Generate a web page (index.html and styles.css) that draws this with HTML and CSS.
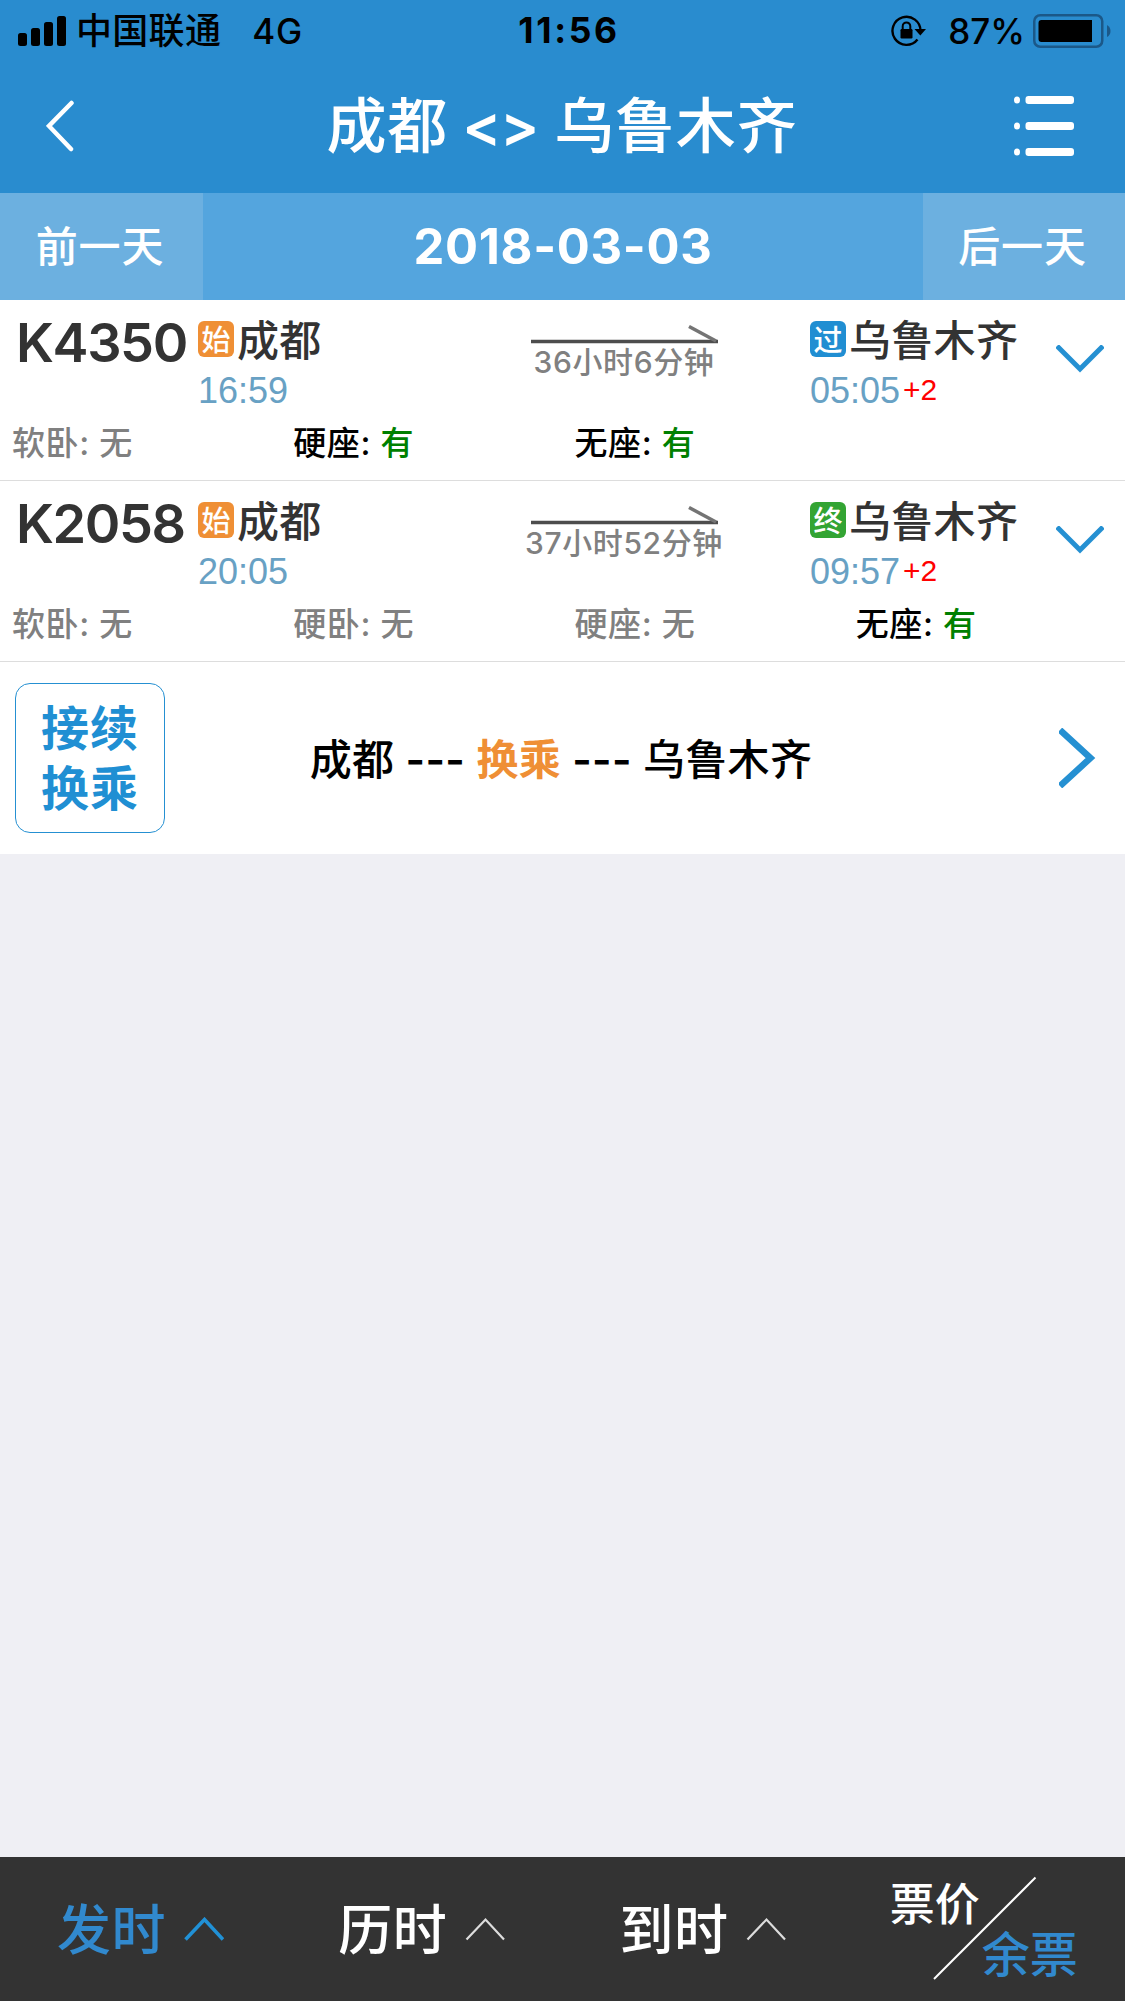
FILE: index.html
```html
<!DOCTYPE html>
<html lang="zh-CN">
<head>
<meta charset="utf-8">
<title>成都 - 乌鲁木齐</title>
<link rel="stylesheet" href="styles.css">
</head>
<body>
<div class="app">
  <header class="header">
    <div class="status">
      <div class="status-left">
        <svg class="signal" width="48" height="30" viewBox="0 0 48 30"><rect y="17" width="9" height="13" rx="2.5"/><rect x="13" y="12" width="9" height="18" rx="2.5"/><rect x="26" y="6" width="9" height="24" rx="2.5"/><rect x="39" width="9" height="30" rx="2.5"/></svg>
        <span class="carrier">中国联通</span>
        <span class="network">4G</span>
      </div>
      <span class="clock">11:56</span>
      <div class="status-right">
        <svg class="lock" width="36" height="32" viewBox="0 0 36 32"><path d="M29.5 16A14 14 0 1 0 26.5 24.5" fill="none" stroke="#000" stroke-width="2.4"/><path d="M23.5 14H35l-5.700 6.500z"/><rect x="9.500" y="14" width="12" height="9.500" rx="1.200"/><path d="M11.700 15v-3.800a3.800 3.800 0 0 1 7.600 0V15" fill="none" stroke="#000" stroke-width="2"/></svg>
        <span class="percent">87%</span>
        <svg class="battery" width="78" height="34" viewBox="0 0 78 34"><rect x="1.25" y="1.25" width="68" height="31.5" rx="6" fill="none" stroke="#1b5888" stroke-width="2.5"/><path d="M8.500 6H59v22H8.500a3 3 0 0 1-3-3V9a3 3 0 0 1 3-3z"/><path d="M74 11q3.500 2 3.500 6t-3.500 6z" fill="#1b5888"/></svg>
      </div>
    </div>
    <div class="nav">
      <svg class="back" width="30" height="52" viewBox="0 0 30 52"><path d="M25.500 3 3 26 25 49" fill="none" stroke="#fff" stroke-width="4.500" stroke-linecap="round"/></svg>
      <h1 class="title"><span>成都</span><span class="swap">&lt;&gt;</span><span>乌鲁木齐</span></h1>
      <svg class="menu" width="60" height="60" viewBox="0 0 60 60" fill="#fff"><ellipse cx="3" cy="4" rx="3" ry="3.600"/><ellipse cx="3" cy="30" rx="3" ry="3.600"/><ellipse cx="3" cy="56" rx="3" ry="3.600"/><rect x="11.500" width="48.500" height="8" rx="3"/><rect x="11.500" y="26" width="48.500" height="8" rx="3"/><rect x="11.500" y="52" width="48.500" height="8" rx="3"/></svg>
    </div>
  </header>

  <div class="datebar">
    <span class="day">前一天</span>
    <strong class="date">2018-03-03</strong>
    <span class="day">后一天</span>
  </div>

  <main class="list">
    <section class="train">
      <div class="trip">
        <b class="number">K4350</b>
        <div class="stop">
          <div class="station"><i class="badge start">始</i>成都</div>
          <div class="time">16:59</div>
        </div>
        <div class="span">
          <svg class="arrow" width="187" height="19" viewBox="0 0 187 19"><path d="M0 16.500H187" stroke="#4d4d4d" stroke-width="3.600"/><path d="M158 1.500 185 16" stroke="#747474" stroke-width="3.500"/></svg>
          <span class="duration">36小时6分钟</span>
        </div>
        <div class="stop">
          <div class="station"><i class="badge pass">过</i>乌鲁木齐</div>
          <div class="time">05:05<span class="plus">+2</span></div>
        </div>
        <svg class="expand" width="48" height="28" viewBox="0 0 48 28"><path d="M1 1 24 24 47 1" fill="none" stroke="#2590d2" stroke-width="5"/></svg>
      </div>
      <div class="seats">
        <span class="seat">软卧: 无</span>
        <span class="seat open">硬座: <em>有</em></span>
        <span class="seat open">无座: <em>有</em></span>
      </div>
    </section>

    <section class="train">
      <div class="trip">
        <b class="number">K2058</b>
        <div class="stop">
          <div class="station"><i class="badge start">始</i>成都</div>
          <div class="time">20:05</div>
        </div>
        <div class="span">
          <svg class="arrow" width="187" height="19" viewBox="0 0 187 19"><path d="M0 16.500H187" stroke="#4d4d4d" stroke-width="3.600"/><path d="M158 1.500 185 16" stroke="#747474" stroke-width="3.500"/></svg>
          <span class="duration">37小时52分钟</span>
        </div>
        <div class="stop">
          <div class="station"><i class="badge end">终</i>乌鲁木齐</div>
          <div class="time">09:57<span class="plus">+2</span></div>
        </div>
        <svg class="expand" width="48" height="28" viewBox="0 0 48 28"><path d="M1 1 24 24 47 1" fill="none" stroke="#2590d2" stroke-width="5"/></svg>
      </div>
      <div class="seats">
        <span class="seat">软卧: 无</span>
        <span class="seat">硬卧: 无</span>
        <span class="seat">硬座: 无</span>
        <span class="seat open">无座: <em>有</em></span>
      </div>
    </section>

    <section class="transfer">
      <div class="transfer-tag"><span>接续</span><span>换乘</span></div>
      <div class="route"><span>成都</span><span class="dash">---</span><span class="via">换乘</span><span class="dash">---</span><span>乌鲁木齐</span></div>
      <svg class="go" width="37" height="60" viewBox="0 0 37 60"><path d="M1 2 31.500 30 1 58" fill="none" stroke="#2590d2" stroke-width="6.500"/></svg>
    </section>
  </main>

  <footer class="tabs">
    <div class="tab active"><span>发时</span><svg width="40" height="24" viewBox="0 0 40 24"><path d="M1.500 22.500 20.500 2.500 39 22.500" fill="none" stroke="#2191d6" stroke-width="3.600"/></svg></div>
    <div class="tab"><span>历时</span><svg width="40" height="24" viewBox="0 0 40 24"><path d="M1.500 22.500 20.500 2.500 39 22.500" fill="none" stroke="#ddd" stroke-width="2.200"/></svg></div>
    <div class="tab"><span>到时</span><svg width="40" height="24" viewBox="0 0 40 24"><path d="M1.500 22.500 20.500 2.500 39 22.500" fill="none" stroke="#ddd" stroke-width="2.200"/></svg></div>
    <div class="switch">
      <span class="price">票价</span>
      <svg class="slash" width="104" height="104" viewBox="0 0 104 104"><path d="M1 103 102.500 1.500" stroke="#fff" stroke-width="2"/></svg>
      <span class="remain">余票</span>
    </div>
  </footer>
</div>
</body>
</html>
```
FILE: styles.css
```css
* { box-sizing: border-box; }
body {
  margin: 0;
  font-family: Inter, "Noto Sans CJK SC", sans-serif;
  font-weight: 500;
  background: #efeff4;
}
svg { display: block; flex: none; }
.app { display: flex; flex-direction: column; width: 1125px; height: 2001px; white-space: nowrap; overflow: hidden; }

.header { height: 193px; background: #298ccf; }
.status { display: grid; grid-template-columns: 1fr auto 1fr; align-items: center; height: 60px; padding: 0 14px 0 18px; font-size: 35px; line-height: 60px; color: #000; }
.status-left { display: flex; align-items: center; }
.carrier { margin-left: 10px; font-size: 36px; letter-spacing: .3px; line-height: 62px; }
.network { margin-left: 31px; font-size: 35px; letter-spacing: .8px; line-height: 62px; }
.clock { padding-left: 9px; font-size: 35.500px; font-weight: 700; letter-spacing: 2.700px; line-height: 62px; }
.status-right { display: flex; align-items: center; justify-content: flex-end; }
.percent { margin: 0 8px 0 21px; font-size: 35px; line-height: 62px; }

.nav { display: grid; grid-template-columns: 203px 1fr 203px; align-items: center; height: 133px; color: #fff; }
.back { margin: 0 0 2px 46px; }
.menu { justify-self: end; margin: 0 51px 2px 0; }
.title { display: flex; justify-content: center; margin: 0; padding-right: 1px; font-size: 60px; font-weight: 500; letter-spacing: .8px; line-height: 133px; }
.swap { margin: 0 16px 0 14px; letter-spacing: -1px; font-size: 58px; font-weight: 600; }

.datebar { display: grid; grid-template-columns: 203px 1fr 202px; height: 107px; background: #54a5de; color: #fff; text-align: center; line-height: 107px; }
.day { background: #6cb0e0; font-size: 42px; letter-spacing: .8px; padding-right: 3px; }
.date { font-size: 49px; font-weight: 700; letter-spacing: .7px; line-height: 107px; }

.list { flex: 1; }
.train { height: 181px; background: #fff; border-bottom: 1px solid #ddd; }
.trip { display: grid; grid-template-columns: 198px 312px 300px 246px 69px; height: 110px; color: #333; }
.number { padding-left: 16px; font-size: 54px; font-weight: 600; letter-spacing: -1.400px; line-height: 85px; }
.station { display: flex; align-items: center; height: 80px; padding-top: 2px; font-size: 42px; letter-spacing: .3px; line-height: 82px; }
.badge { width: 36px; height: 36px; margin: 0 3px 4px 0; border-radius: 6px; color: #fff; font-size: 29px; font-style: normal; letter-spacing: 0; line-height: 39px; text-align: center; }
.start { background: #ef8f35; }
.pass { background: #208ed2; }
.end { background: #33a433; }
.time { margin-top: -9px; font-family: "Liberation Sans", sans-serif; font-size: 36px; font-weight: 400; line-height: 40px; color: #68a1c4; }
.plus { margin-left: 3px; font-size: 30px; color: #f00; vertical-align: 3px; line-height: 1; }
.span { display: flex; flex-direction: column; align-items: center; padding: 25px 72px 0 0; }
.duration { font-size: 30px; line-height: 37px; letter-spacing: .6px; color: #808080; }
.expand { margin-top: 45px; }
.seats { display: grid; grid-template-columns: repeat(4, 281.250px); height: 70px; padding-left: 12px; font-size: 33px; letter-spacing: .6px; line-height: 66px; }
.seat { color: #808080; }
.open { color: #000; }
.open em { color: #008000; font-style: normal; }

.transfer { display: grid; grid-template-columns: 165px 1fr 66px; align-items: center; height: 192px; background: #fff; }
.transfer-tag { display: flex; flex-direction: column; justify-content: center; align-items: center; width: 150px; height: 150px; margin-left: 15px; padding-top: 2px; border: 1px solid #2590d2; border-radius: 15px; color: #208fd3; font-size: 48px; font-weight: 600; letter-spacing: 1px; line-height: 60px; }
.route { display: flex; justify-content: center; padding: 4px 102px 0 0; font-size: 42px; letter-spacing: .3px; line-height: 60px; color: #000; }
.dash { width: 82px; text-align: center; font-weight: 600; }
.via { color: #ef8f35; font-weight: 600; }

.tabs { display: grid; grid-template-columns: repeat(4, 281.250px); height: 144px; background: #333; color: #fff; }
.tab { display: flex; align-items: center; padding-left: 57px; font-size: 54px; letter-spacing: .4px; line-height: 138px; }
.tab span { padding-top: 3px; }
.tab svg { margin-left: 18px; }
.active, .remain { color: #3189ce; }
.switch { position: relative; }
.price, .slash, .remain { position: absolute; }
.price { left: 46px; top: 18px; font-size: 45px; line-height: 60px; }
.slash { left: 89px; top: 19px; }
.remain { left: 138px; top: 68px; font-size: 48px; line-height: 60px; }
```
